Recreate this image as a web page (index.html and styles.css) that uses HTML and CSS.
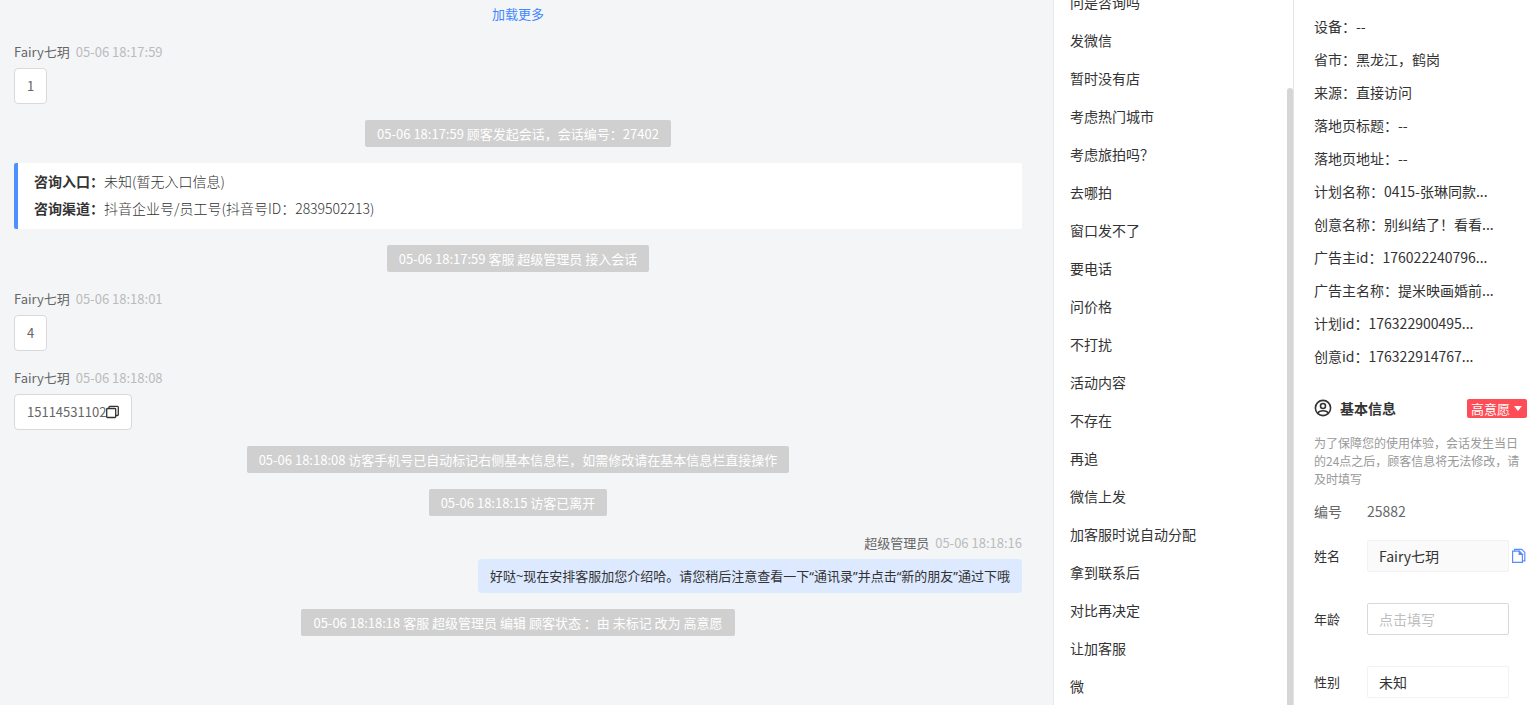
FILE: index.html
```html
<!DOCTYPE html>
<html lang="zh-CN">
<head>
    <meta charset="UTF-8">
    <meta name="viewport" content="width=device-width, initial-scale=1.0">
    <title>会话记录</title>
    <link rel="stylesheet" href="styles.css">
</head>
<body>

<div class="layout">
    <!-- Conversation -->
    <main class="chat">
        <a href="#" class="load-more">加载更多</a>

        <div class="message">
            <div class="meta">Fairy七玥<span class="time">05-06 18:17:59</span></div>
            <div class="bubble">1</div>
        </div>

        <div class="notice">05-06 18:17:59 顾客发起会话，会话编号：27402</div>

        <div class="entry-card">
            <div><strong>咨询入口：</strong>未知(暂无入口信息)</div>
            <div><strong>咨询渠道：</strong>抖音企业号/员工号(抖音号ID：2839502213)</div>
        </div>

        <div class="notice">05-06 18:17:59 客服 超级管理员 接入会话</div>

        <div class="message">
            <div class="meta">Fairy七玥<span class="time">05-06 18:18:01</span></div>
            <div class="bubble">4</div>
        </div>

        <div class="message">
            <div class="meta">Fairy七玥<span class="time">05-06 18:18:08</span></div>
            <div class="bubble">15114531102<button type="button" class="icon-button" aria-label="复制">
                <svg width="13" height="14" viewBox="0 0 13 14" fill="none" stroke="#333" stroke-width="1.3">
                    <rect x="0.700" y="3.500" width="9" height="9" rx="0.800"/>
                    <path d="M3 3.500V2.200a.8.8 0 0 1 .8-.8h7.700a.8.8 0 0 1 .8.8v7.500a.8.8 0 0 1-.8.8H9.700"/>
                </svg>
            </button></div>
        </div>

        <div class="notice">05-06 18:18:08 访客手机号已自动标记右侧基本信息栏，如需修改请在基本信息栏直接操作</div>
        <div class="notice">05-06 18:18:15 访客已离开</div>

        <div class="message mine">
            <div class="meta">超级管理员<span class="time">05-06 18:18:16</span></div>
            <div class="bubble">好哒~现在安排客服加您介绍哈。请您稍后注意查看一下“通讯录”并点击“新的朋友”通过下哦</div>
        </div>

        <div class="notice">05-06 18:18:18 客服 超级管理员 编辑 顾客状态 ：由 未标记 改为 高意愿</div>
    </main>

    <!-- Quick replies -->
    <aside class="replies">
        <ul class="reply-list">
            <li>问是咨询吗</li>
            <li>发微信</li>
            <li>暂时没有店</li>
            <li>考虑热门城市</li>
            <li>考虑旅拍吗？</li>
            <li>去哪拍</li>
            <li>窗口发不了</li>
            <li>要电话</li>
            <li>问价格</li>
            <li>不打扰</li>
            <li>活动内容</li>
            <li>不存在</li>
            <li>再追</li>
            <li>微信上发</li>
            <li>加客服时说自动分配</li>
            <li>拿到联系后</li>
            <li>对比再决定</li>
            <li>让加客服</li>
            <li>微</li>
        </ul>
        <div class="scroll-thumb"></div>
    </aside>

    <!-- Visitor details -->
    <aside class="details">
        <ul class="visit-info">
            <li>设备：--</li>
            <li>省市：黑龙江，鹤岗</li>
            <li>来源：直接访问</li>
            <li>落地页标题：--</li>
            <li>落地页地址：--</li>
            <li>计划名称：0415-张琳同款...</li>
            <li>创意名称：别纠结了！看看...</li>
            <li>广告主id：176022240796...</li>
            <li>广告主名称：提米映画婚前...</li>
            <li>计划id：176322900495...</li>
            <li>创意id：176322914767...</li>
        </ul>

        <div class="section-title">
            <svg width="18" height="18" viewBox="0 0 18 18" fill="none" stroke="#333" stroke-width="1.6">
                <circle cx="9" cy="9" r="7.600"/>
                <circle cx="9" cy="7" r="2.500"/>
                <path d="M3.800 14c.8-1.600 2.400-2.200 5.200-2.200s4.400.6 5.200 2.200"/>
            </svg>
            <h2>基本信息</h2>
            <button type="button" class="tag">高意愿<span class="caret"></span></button>
        </div>
        <p class="hint">为了保障您的使用体验，会话发生当日的24点之后，顾客信息将无法修改，请及时填写</p>

        <form>
            <div class="number"><span class="label">编号</span>25882</div>
            <div class="field">
                <label class="label" for="name">姓名</label>
                <input type="text" id="name" class="filled" value="Fairy七玥">
                <button type="button" class="icon-button" aria-label="复制姓名">
                    <svg width="14" height="16" viewBox="0 0 14 16" fill="none" stroke="#5a8cff" stroke-width="1.2">
                        <path d="M.6 3.200h6.600l3.200 3.200v8H.6z"/>
                        <path d="M7.200 3.200v3.200h3.200z" fill="#5a8cff"/>
                        <path d="M2.600 3.200V1.400h7.200l3 3v8.400h-2.400"/>
                    </svg>
                </button>
            </div>
            <div class="field">
                <label class="label" for="age">年龄</label>
                <input type="text" id="age" class="outlined" placeholder="点击填写">
            </div>
            <div class="field">
                <label class="label" for="gender">性别</label>
                <select id="gender">
                    <option>未知</option>
                    <option>男</option>
                    <option>女</option>
                </select>
            </div>
        </form>
    </aside>
</div>

</body>
</html>
```

FILE: styles.css
```css
* {
    box-sizing: border-box;
}
body {
    margin: 0;
    font-family: "Noto Sans CJK SC", sans-serif;
    font-size: 14px;
    line-height: 22px;
    color: #333;
}
ul {
    margin: 0;
    padding: 0;
    list-style: none;
}
button, input, select {
    font-family: inherit;
    font-size: 14px;
    color: #333;
}
.layout {
    display: flex;
    height: 100vh;
    overflow: hidden;
}

/* Conversation */
.chat {
    flex: 1;
    min-width: 0;
    display: flex;
    flex-direction: column;
    align-items: center;
    gap: 16px;
    padding: 3px 31px 16px 14px;
    background-color: #f4f5f7;
    border-right: 1px solid #e8e8e8;
    font-size: 13px;
}
.load-more {
    color: #3f87ff;
    text-decoration: none;
}
.message {
    align-self: stretch;
    display: flex;
    flex-direction: column;
    align-items: flex-start;
    gap: 5px;
}
.meta {
    color: #666;
}
.time {
    margin-left: 6px;
    color: #bbb;
}
.bubble {
    display: flex;
    align-items: center;
    padding: 6px 12px;
    background-color: #fff;
    border: 1px solid #d9d9d9;
    border-radius: 4px;
    color: #666;
}
.mine {
    align-items: flex-end;
}
.mine .bubble {
    border: none;
    background-color: #dce9ff;
    color: #333;
    font-family: "Noto Sans", "Noto Sans CJK SC", sans-serif;
}
.notice {
    padding: 3px 12px 2px;
    background-color: #d0d0d0;
    border-radius: 2px;
    color: #fff;
}
.entry-card {
    align-self: stretch;
    padding: 5px 16px 7px;
    background-color: #fff;
    border-left: 4px solid #4d90ff;
    border-radius: 2px;
    font-size: 14px;
    font-weight: 300;
    line-height: 27px;
}
.entry-card strong {
    font-weight: 700;
}
.icon-button {
    display: flex;
    padding: 0;
    border: none;
    background: none;
    cursor: pointer;
}

/* Quick replies */
.replies {
    position: relative;
    flex: 0 0 240px;
    overflow: hidden;
    border-right: 1px solid #e4e4e4;
}
.reply-list {
    margin-top: -17px;
    padding-left: 16px;
}
.reply-list li {
    padding: 8px 0;
}
.scroll-thumb {
    position: absolute;
    top: 88px;
    right: 0;
    bottom: 0;
    width: 6px;
    background-color: #d6d6d6;
    border-radius: 3px 3px 0 0;
}

/* Visitor details */
.details {
    flex: 0 0 233px;
    padding: 10px 0 0 20px;
}
.visit-info li {
    line-height: 33px;
}
.section-title {
    display: flex;
    align-items: center;
    gap: 8px;
    margin-top: 24px;
}
.section-title h2 {
    margin: 0;
    font-size: 14px;
}
.tag {
    display: flex;
    align-items: center;
    gap: 4px;
    margin-left: auto;
    padding: 0 5px 0 4px;
    border: none;
    border-radius: 2px;
    background-color: #ff4d57;
    color: #fff;
    font-size: 13px;
    line-height: 19px;
}
.caret {
    border: 4px solid transparent;
    border-top: 5px solid #fff;
    border-bottom: none;
}
.hint {
    margin: 15px 4px 12px 0;
    font-size: 12px;
    line-height: 18px;
    color: #999;
}
.number {
    display: flex;
    margin-bottom: 18px;
    color: #666;
}
.label {
    flex: 0 0 53px;
}
.field .label {
    font-size: 13px;
}
.field {
    display: flex;
    align-items: center;
    margin-bottom: 31px;
}
.field input, .field select {
    width: 142px;
    height: 32px;
    padding: 0 11px;
    border: 1px solid #f2f2f2;
    border-radius: 2px;
    background-color: #fff;
    appearance: none;
}
.field .filled {
    background-color: #fafafa;
}
.field .outlined {
    border-color: #d9d9d9;
}
.field input::placeholder {
    color: #bfbfbf;
}
.field .icon-button {
    margin-left: 3px;
}
```
